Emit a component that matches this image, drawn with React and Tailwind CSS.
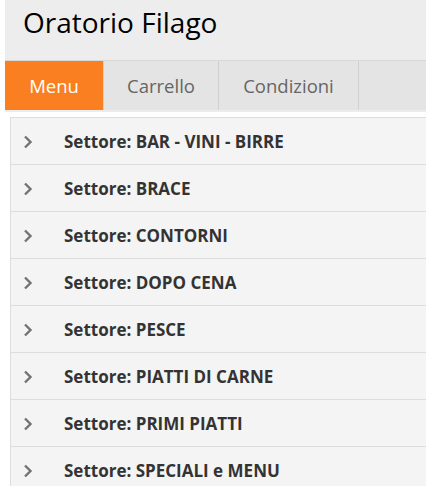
import React from "react";

const items = [
  "Settore: BAR - VINI - BIRRE",
  "Settore: BRACE",
  "Settore: CONTORNI",
  "Settore: DOPO CENA",
  "Settore: PESCE",
  "Settore: PIATTI DI CARNE",
  "Settore: PRIMI PIATTI",
  "Settore: SPECIALI e MENU",
];

function Chevron() {
  return (
    <svg width="10" height="14" viewBox="0 0 10 14" className="shrink-0">
      <path d="M2 1.5 L7.5 7 L2 12.5" fill="none" stroke="#737373" strokeWidth="2.4" />
    </svg>
  );
}

export default function App() {
  return (
    <div className="w-[426px] h-[486px] overflow-hidden bg-white pl-[5px]" style={{ fontFamily: '"Open Sans", "Noto Sans", sans-serif' }}>
      <div className="h-[60px] bg-[#ededed] pl-[18px] pt-[8px]">
        <div className="text-[28px] text-black leading-none">Oratorio Filago</div>
      </div>
      <div className="h-[52px] bg-[#e4e4e4] border-t border-[#d8d8d8] border-b-2 border-b-[#ececec] flex">
        <div className="w-[98px] bg-[#f97f20] text-white text-[18.5px] flex items-center justify-center">Menu</div>
        <div className="w-[115px] border-l border-[#d0d0d0] text-[#666] text-[18.5px] flex items-center justify-center">Carrello</div>
        <div className="w-[141px] border-l border-r border-[#d0d0d0] text-[#666] text-[18.5px] flex items-center justify-center">Condizioni</div>
      </div>
      <div className="pt-[5px] pl-[5px]">
        <div className="border-t border-l border-[#dddddd] bg-[#f4f4f4]">
          {items.map((t) => (
            <div key={t} className="h-[47px] border-b border-[#dddddd] flex items-center pl-[12px] pt-[2px]">
              <Chevron />
              <span className="ml-[31px] text-[17px] font-bold text-[#333]">{t}</span>
            </div>
          ))}
        </div>
      </div>
    </div>
  );
}
